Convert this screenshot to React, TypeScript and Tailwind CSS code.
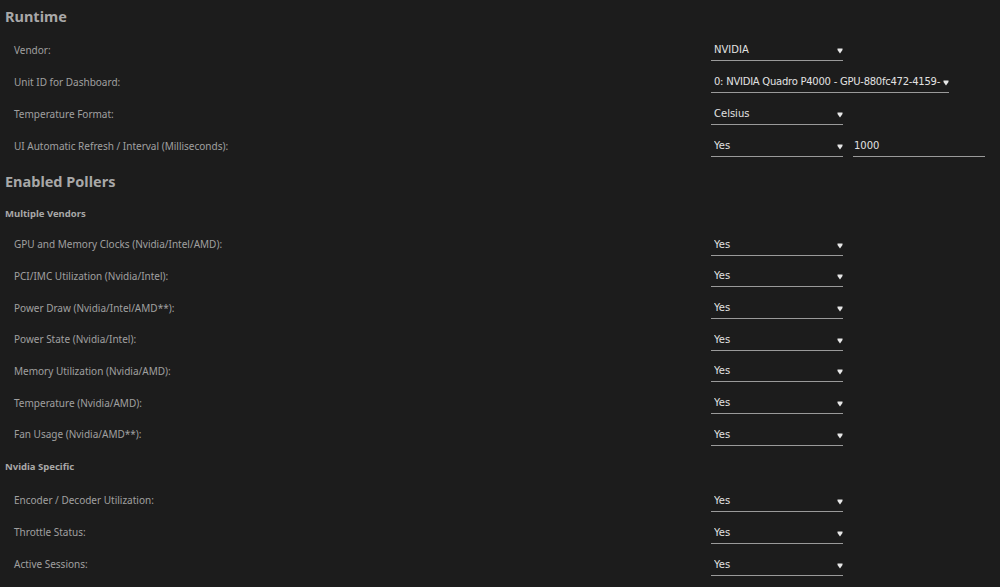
import { useState } from "react";

const yesNo = ["Yes", "No"];

function Arrow() {
  return (
    <svg
      className="pointer-events-none absolute bottom-[6px] right-0"
      width="6"
      height="6"
      viewBox="0 0 6 6"
    >
      <path d="M0.5 0.5 H5.5 V2 L3 5.5 L0.5 2 Z" fill="#e6e6e6" />
    </svg>
  );
}

function Select({
  value,
  options,
  onChange,
  wide,
}: {
  value: string;
  options: string[];
  onChange: (v: string) => void;
  wide?: boolean;
}) {
  return (
    <div
      className={`relative h-[22px] border-b border-[#9a9a9a] ${
        wide ? "w-[238px]" : "w-[132px]"
      }`}
    >
      <select
        value={value}
        onChange={(e) => onChange(e.target.value)}
        className={`block h-[21px] w-full appearance-none bg-transparent pl-[3px] pr-[6px] text-[10px] leading-[21px] text-[#e2e2e2] outline-none ${
          wide ? "tracking-[-0.25px]" : ""
        }`}
        style={{ fontFamily: '"DejaVu Sans", Verdana, sans-serif' }}
      >
        {options.map((o) => (
          <option key={o} value={o} className="bg-[#1c1c1c]">
            {o}
          </option>
        ))}
      </select>
      <Arrow />
    </div>
  );
}

function Row({
  label,
  h = "h-8",
  children,
}: {
  label: string;
  h?: string;
  children: React.ReactNode;
}) {
  return (
    <div className={`flex items-center ${h}`}>
      <label className="w-[706px] shrink-0 pl-[9px] text-[10px] text-[#a0a0a0]">
        {label}
      </label>
      <div className="flex items-center gap-[10px]">{children}</div>
    </div>
  );
}

const multiVendor = [
  "GPU and Memory Clocks (Nvidia/Intel/AMD):",
  "PCI/IMC Utilization (Nvidia/Intel):",
  "Power Draw (Nvidia/Intel/AMD**):",
  "Power State (Nvidia/Intel):",
  "Memory Utilization (Nvidia/AMD):",
  "Temperature (Nvidia/AMD):",
  "Fan Usage (Nvidia/AMD**):",
];

const nvidiaOnly = [
  "Encoder / Decoder Utilization:",
  "Throttle Status:",
  "Active Sessions:",
];

export default function App() {
  const [vendor, setVendor] = useState("NVIDIA");
  const [unit, setUnit] = useState("0: NVIDIA Quadro P4000 - GPU-880fc472-4159-");
  const [tempFmt, setTempFmt] = useState("Celsius");
  const [refresh, setRefresh] = useState("Yes");
  const [interval, setIntervalMs] = useState("1000");
  const [pollers, setPollers] = useState<Record<string, string>>({});

  const poll = (k: string) => pollers[k] ?? "Yes";
  const setPoll = (k: string, v: string) =>
    setPollers((p) => ({ ...p, [k]: v }));

  return (
    <div
      className="min-h-screen w-full bg-[#1c1c1c] pl-[5px]"
      style={{ fontFamily: '"Noto Sans", "Open Sans", sans-serif' }}
    >
      {/* Runtime */}
      <h2 className="flex h-[34px] items-center text-[14.5px] font-bold text-[#a8a8a8]">
        Runtime
      </h2>
      <Row label="Vendor:">
        <Select
          value={vendor}
          options={["NVIDIA", "Intel", "AMD"]}
          onChange={setVendor}
        />
      </Row>
      <Row label="Unit ID for Dashboard:">
        <Select
          wide
          value={unit}
          options={["0: NVIDIA Quadro P4000 - GPU-880fc472-4159-"]}
          onChange={setUnit}
        />
      </Row>
      <Row label="Temperature Format:">
        <Select
          value={tempFmt}
          options={["Celsius", "Fahrenheit"]}
          onChange={setTempFmt}
        />
      </Row>
      <Row label="UI Automatic Refresh / Interval (Milliseconds):">
        <Select value={refresh} options={yesNo} onChange={setRefresh} />
        <input
          value={interval}
          onChange={(e) => setIntervalMs(e.target.value)}
          className="h-[22px] w-[132px] border-b border-[#9a9a9a] bg-transparent pl-[1px] text-[10px] text-[#e2e2e2] outline-none"
          style={{ fontFamily: '"DejaVu Sans", Verdana, sans-serif' }}
        />
      </Row>

      {/* Enabled Pollers */}
      <h2 className="mt-[2px] flex h-[36px] items-center text-[14.5px] font-bold text-[#a8a8a8]">
        Enabled Pollers
      </h2>
      <h3 className="flex h-[28px] items-center text-[9.5px] font-bold text-[#a8a8a8]">
        Multiple Vendors
      </h3>
      <div className="pt-[1px]">
        {multiVendor.map((l) => (
          <Row key={l} label={l} h="h-[31.67px]">
            <Select value={poll(l)} options={yesNo} onChange={(v) => setPoll(l, v)} />
          </Row>
        ))}
      </div>
      <h3 className="flex h-[34px] items-center text-[9.5px] font-bold text-[#a8a8a8]">
        Nvidia Specific
      </h3>
      {nvidiaOnly.map((l) => (
        <Row key={l} label={l}>
          <Select value={poll(l)} options={yesNo} onChange={(v) => setPoll(l, v)} />
        </Row>
      ))}
    </div>
  );
}
